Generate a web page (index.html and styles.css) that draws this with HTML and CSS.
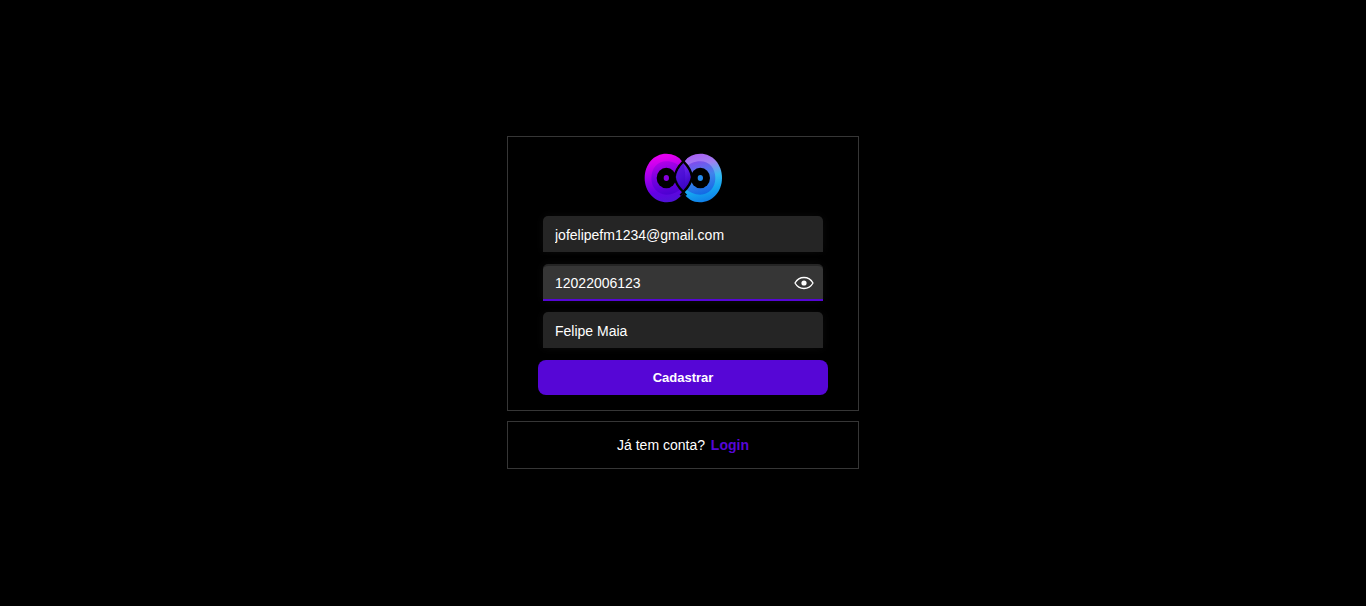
FILE: index.html
```html
<!DOCTYPE html>
<html lang="pt-BR">
<head>
<meta charset="utf-8">
<meta name="viewport" content="width=device-width, initial-scale=1">
<title>Cadastro</title>
<link rel="stylesheet" href="styles.css">
</head>
<body>
<main class="page">
  <section class="card">
    <svg class="logo" viewBox="0 0 288 192" role="img" aria-label="Logo">
      <defs>
        <linearGradient id="left" gradientUnits="userSpaceOnUse" x1="78" y1="30" x2="105" y2="172">
          <stop offset="0.04" stop-color="#e400f0"/>
          <stop offset="0.4" stop-color="#a400ec"/>
          <stop offset="0.75" stop-color="#6400e4"/>
          <stop offset="1" stop-color="#4c14d4"/>
        </linearGradient>
        <linearGradient id="left-inner" gradientUnits="userSpaceOnUse" x1="82" y1="45" x2="105" y2="150">
          <stop offset="0" stop-color="#b800e8"/>
          <stop offset="0.5" stop-color="#7400e0"/>
          <stop offset="1" stop-color="#4a00d0"/>
        </linearGradient>
        <linearGradient id="right" gradientUnits="userSpaceOnUse" x1="180" y1="30" x2="215" y2="172">
          <stop offset="0" stop-color="#a862f2"/>
          <stop offset="0.22" stop-color="#a080f2"/>
          <stop offset="0.5" stop-color="#38bcf2"/>
          <stop offset="0.75" stop-color="#14a4f0"/>
          <stop offset="1" stop-color="#107ce8"/>
        </linearGradient>
        <linearGradient id="right-inner" gradientUnits="userSpaceOnUse" x1="175" y1="45" x2="205" y2="150">
          <stop offset="0" stop-color="#8844ee"/>
          <stop offset="0.5" stop-color="#3f84ec"/>
          <stop offset="1" stop-color="#1068e4"/>
        </linearGradient>
        <linearGradient id="lens" x1="0" y1="0" x2="0.5" y2="1">
          <stop offset="0" stop-color="#8a30f0"/>
          <stop offset="0.55" stop-color="#5b1ae4"/>
          <stop offset="1" stop-color="#3400bc"/>
        </linearGradient>
      </defs>
      <path d="M94 26C56 26 29 58 29 99s29 73 67 73c20 0 36-10 49-27V50C130 34 114 26 94 26z" fill="url(#left)"/>
      <path d="M94 49c-27 0-45 22-45 50s18 50 45 50c19 0 35-8 47-20V70C128 56 113 49 94 49z" fill="url(#left-inner)"/>
      <path d="M196 26c38 0 65 32 65 73s-29 73-67 73c-20 0-36-10-49-27V50c15-16 31-24 51-24z" fill="url(#right)"/>
      <path d="M196 49c27 0 45 22 45 50s-18 50-45 50c-19 0-35-8-47-20V70c13-14 28-21 47-21z" fill="url(#right-inner)"/>
      <ellipse cx="94" cy="99" rx="29" ry="31" fill="#000"/>
      <ellipse cx="196" cy="99" rx="29" ry="31" fill="#000"/>
      <path d="M145 49c-14 14-24 30-26 47 2 18 12 31 26 45 14-14 24-27 26-45-2-17-12-33-26-47z" fill="url(#lens)" stroke="#000" stroke-width="7"/>
      <path d="M145 54c6 24 9 50 0 82-13-13-21-24-23-40 2-15 11-29 23-42z" fill="#3b04c8" opacity="0.5"/>
      <path d="M136 38l9 11 9-11M136 151l9-10 9 10" fill="none" stroke="#000" stroke-width="6"/>
      <ellipse cx="94" cy="99" rx="8" ry="9" fill="#8900df"/>
      <ellipse cx="196" cy="99" rx="8" ry="9" fill="#238aec"/>
    </svg>
    <form class="form">
      <input class="field" type="email" aria-label="Email" value="jofelipefm1234@gmail.com">
      <div class="password">
        <input class="field field-active" type="text" aria-label="Senha" value="12022006123">
        <button class="toggle" type="button" aria-label="Ocultar senha">
          <svg class="eye" viewBox="0 0 20 14" aria-hidden="true">
            <path d="M1 7C3 3.400 6.200 1.500 10 1.500S17 3.400 19 7c-2 3.600-5.200 5.500-9 5.500S3 10.600 1 7z" fill="none" stroke="#fff" stroke-width="1.300"/>
            <circle cx="10" cy="7" r="2.600" fill="#fff"/>
          </svg>
        </button>
      </div>
      <input class="field" type="text" aria-label="Nome" value="Felipe Maia">
      <button class="submit" type="submit">Cadastrar</button>
    </form>
  </section>
  <section class="card login">
    <p class="prompt">Já tem conta? <a class="link" href="#">Login</a></p>
  </section>
</main>
</body>
</html>
```
FILE: styles.css
```css
* {
  box-sizing: border-box;
}

body {
  margin: 0;
  background: #000;
  color: #fff;
  font-family: "Liberation Sans", Arial, sans-serif;
  font-size: 14px;
}

.page {
  min-height: 100vh;
  display: flex;
  flex-direction: column;
  align-items: center;
  justify-content: center;
  gap: 10px;
  padding-bottom: 1px;
}

.card {
  width: 100%;
  max-width: 352px;
  display: flex;
  flex-direction: column;
  align-items: center;
  padding: 8px 30px 15px;
  border: 1px solid #363636;
}

.logo {
  width: 96px;
  height: 64px;
}

.form {
  width: 100%;
  display: flex;
  flex-direction: column;
  gap: 12px;
  margin-top: 7px;
}

.field {
  display: block;
  width: calc(100% - 10px);
  height: 36px;
  margin: 0 5px;
  padding: 2px 12px 0;
  border: 0;
  border-radius: 5px 5px 0 0;
  outline: 0;
  background: #252525;
  box-shadow: 0 0 10px rgba(37, 37, 37, 0.3);
  color: #fff;
  font: inherit;
}

.password {
  position: relative;
}

.field-active {
  height: 37px;
  margin-bottom: -1px;
  padding: 0 40px 0 12px;
  border-top: 2px solid #252525;
  border-bottom: 2px solid #5606d6;
  background: #363636;
}

.toggle {
  position: absolute;
  top: 0;
  right: 5px;
  width: 39px;
  height: 100%;
  display: flex;
  align-items: center;
  justify-content: center;
  padding: 2px 0 0;
  border: 0;
  background: none;
  cursor: pointer;
}

.eye {
  width: 20px;
  height: 14px;
}

.submit {
  height: 35px;
  padding: 0;
  border: 0;
  border-radius: 8px;
  background: #5606d6;
  color: #fff;
  font-family: inherit;
  font-size: 13px;
  font-weight: bold;
  cursor: pointer;
}

.login {
  padding: 15px;
}

.prompt {
  margin: 0;
  line-height: 16px;
}

.link {
  margin-left: 2px;
  color: #5606d6;
  font-weight: bold;
  text-decoration: none;
}
```
